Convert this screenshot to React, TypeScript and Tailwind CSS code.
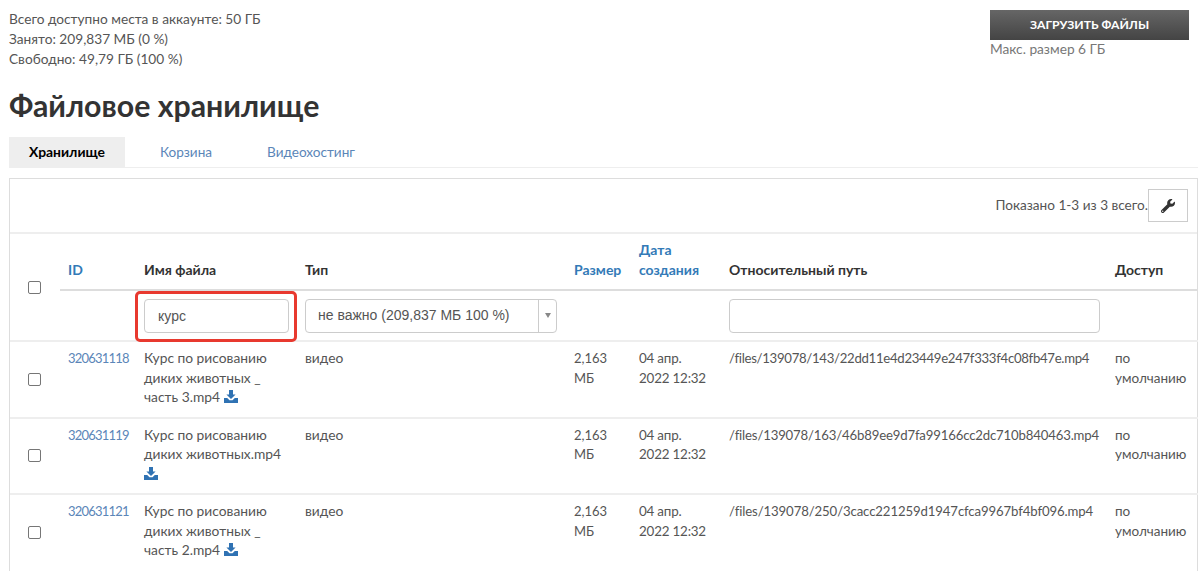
import React from "react";
import { FaWrench } from "react-icons/fa";

const rows = [
  {
    id: "320631118",
    name: "Курс по рисованию диких животных _ часть 3.mp4",
    path: "/files/139078/143/22dd11e4d23449e247f333f4c08fb47e.mp4",
    pathClass: "tracking-[-0.300px]",
  },
  {
    id: "320631119",
    name: "Курс по рисованию диких животных.mp4",
    path: "/files/139078/163/46b89ee9d7fa99166cc2dc710b840463.mp4",
    pathClass: "tracking-[-0.170px]",
  },
  {
    id: "320631121",
    name: "Курс по рисованию диких животных _ часть 2.mp4",
    path: "/files/139078/250/3cacc221259d1947cfca9967bf4bf096.mp4",
    pathClass: "tracking-[-0.120px]",
  },
];

function SaveIcon() {
  return (
    <svg viewBox="0 0 14 13" className="inline-block w-[14px] h-[13px] align-[-1px] text-[#2f72b3]" fill="currentColor">
      <path d="M5 0h4v4.500h2.600L7 9 2.400 4.500H5z" />
      <path d="M0 8h3.200l2.300 2.200h3L10.800 8H14v5H0z" />
    </svg>
  );
}

function Checkbox() {
  return <input type="checkbox" className="w-[13px] h-[13px] block ml-[18px] appearance-none border border-[#767676] rounded-[2px] bg-white" />;
}

export default function App() {
  return (
    <div className="w-[1200px] h-[571px] overflow-hidden bg-white pl-[9px] pr-[2px] text-[13.700px] leading-[20px] text-[#555] font-['Lato','Open_Sans',sans-serif]">
      <div className="flex justify-between pt-[9px] pr-[9px]">
        <div className="leading-[20px]">
          <div>Всего доступно места в аккаунте: 50 ГБ</div>
          <div>Занято: 209,837 МБ (0 %)</div>
          <div>Свободно: 49,79 ГБ (100 %)</div>
        </div>
        <div className="w-[199px] pt-px">
          <div className="h-[30px] flex items-center justify-center bg-gradient-to-b from-[#666] to-[#444] text-white text-[12.200px] font-bold">
            ЗАГРУЗИТЬ ФАЙЛЫ
          </div>
          <div className="text-[#777] mt-[-1px]">Макс. размер 6 ГБ</div>
        </div>
      </div>
      <h1 className="mt-[16px] text-[30.300px] leading-[40px] font-bold text-[#333]">Файловое хранилище</h1>
      <div className="mt-[12px] flex h-[31px] border-b border-[#eee] text-[13.600px]">
        <div className="w-[116px] h-[30px] bg-[#eee] flex items-center justify-center text-[13.900px] font-bold text-black">Хранилище</div>
        <div className="w-[124px] pr-[2px] flex items-center justify-center text-[#5b86b8] h-[30px]">Корзина</div>
        <div className="ml-[10px] px-[8px] flex items-center text-[#5b86b8] h-[30px]">Видеохостинг</div>
      </div>
      <div className="mt-[10px] border border-[#ddd]">
        <div className="h-[55px] flex items-start justify-end pt-[10px] pr-[9px] border-b-2 border-[#eee] text-[13.600px]">
          <span className="mt-[6px]">Показано 1-3 из 3 всего.</span>
          <div className="w-[40px] h-[33px] flex items-center justify-center border border-[#ccc] text-[#333] text-[14px]">
            <FaWrench />
          </div>
        </div>
        <table className="w-[1188px] table-fixed border-collapse text-[13.800px] leading-[19.500px]">
          <colgroup>
            <col className="w-[50px]" />
            <col className="w-[76px]" />
            <col className="w-[161px]" />
            <col className="w-[269px]" />
            <col className="w-[65px]" />
            <col className="w-[90px]" />
            <col className="w-[386px]" />
            <col className="w-[91px]" />
          </colgroup>
          <thead className="text-[14px]">
            <tr className="h-[56px]">
              <th rowSpan={2} className="border-b-2 border-[#eee]">
                <Checkbox />
              </th>
              <th className="px-2 pb-[10px] align-bottom text-left text-[#337ab7] border-b-2 border-[#ddd]">ID</th>
              <th className="px-2 pb-[10px] align-bottom text-left text-[#333] border-b-2 border-[#ddd]">Имя файла</th>
              <th className="px-2 pb-[10px] align-bottom text-left text-[#333] border-b-2 border-[#ddd]">Тип</th>
              <th className="px-2 pb-[10px] align-bottom text-left text-[#337ab7] border-b-2 border-[#ddd]">Размер</th>
              <th className="px-2 pb-[10px] align-bottom text-left text-[#337ab7] border-b-2 border-[#ddd]">Дата создания</th>
              <th className="px-2 pb-[10px] align-bottom text-left text-[#333] border-b-2 border-[#ddd]">Относительный путь</th>
              <th className="px-2 pb-[10px] align-bottom text-left text-[#333] border-b-2 border-[#ddd]">Доступ</th>
            </tr>
            <tr className="h-[51px] border-b-2 border-[#eee]">
              <td></td>
              <td className="px-2 relative">
                <input readOnly value="курс" className="w-[145px] h-[34px] block border border-[#ccc] rounded-[4px] px-[13px] text-[#555] text-[14px] font-['Liberation_Sans',sans-serif] outline-none" />
                <span className="absolute left-[-1px] top-0 w-[162px] h-[51px] border-[3px] border-[#e8392f] rounded-[5px]"></span>
              </td>
              <td colSpan={3} className="px-2">
                <div className="w-[252px] h-[34px] flex border border-[#ccc] rounded-[4px]">
                  <div className="flex-1 flex items-center pl-[12px] text-[#555] text-[14px] font-['Liberation_Sans',sans-serif]">не важно (209,837 МБ 100 %)</div>
                  <div className="w-[18px] flex items-center justify-center border-l border-[#ccc]">
                    <span className="w-0 h-0 border-x-[3px] border-x-transparent border-t-[5px] border-t-[#888]"></span>
                  </div>
                </div>
              </td>
              <td className="px-2">
                <input readOnly className="w-[371px] h-[34px] block border border-[#ccc] rounded-[4px] outline-none" />
              </td>
              <td></td>
            </tr>
          </thead>
          <tbody>
            {rows.map((row) => (
              <tr key={row.id} className="h-[76.500px] border-b-2 border-[#eee] last:border-b-0">
                <td><Checkbox /></td>
                <td className="px-2 pt-[7px] pb-[7px] align-top text-[13px] tracking-[-0.800px] text-[#5b86b8]">{row.id}</td>
                <td className="px-2 pt-[6px] pb-[7px] align-top">
                  {row.name} <SaveIcon />
                </td>
                <td className="px-2 pt-[6px] pb-[7px] align-top">видео</td>
                <td className="px-2 pt-[7px] pb-[7px] align-top text-[13px]">2,163 МБ</td>
                <td className="px-2 pt-[7px] pb-[7px] align-top text-[13.400px] tracking-[-0.200px]">04 апр. 2022 12:32</td>
                <td className={`px-2 pt-[7px] pb-[7px] align-top whitespace-nowrap text-[13.200px] ${row.pathClass}`}>{row.path}</td>
                <td className="px-2 pt-[7px] pb-[7px] align-top text-[13.500px]">по умолчанию</td>
              </tr>
            ))}
          </tbody>
        </table>
      </div>
    </div>
  );
}
